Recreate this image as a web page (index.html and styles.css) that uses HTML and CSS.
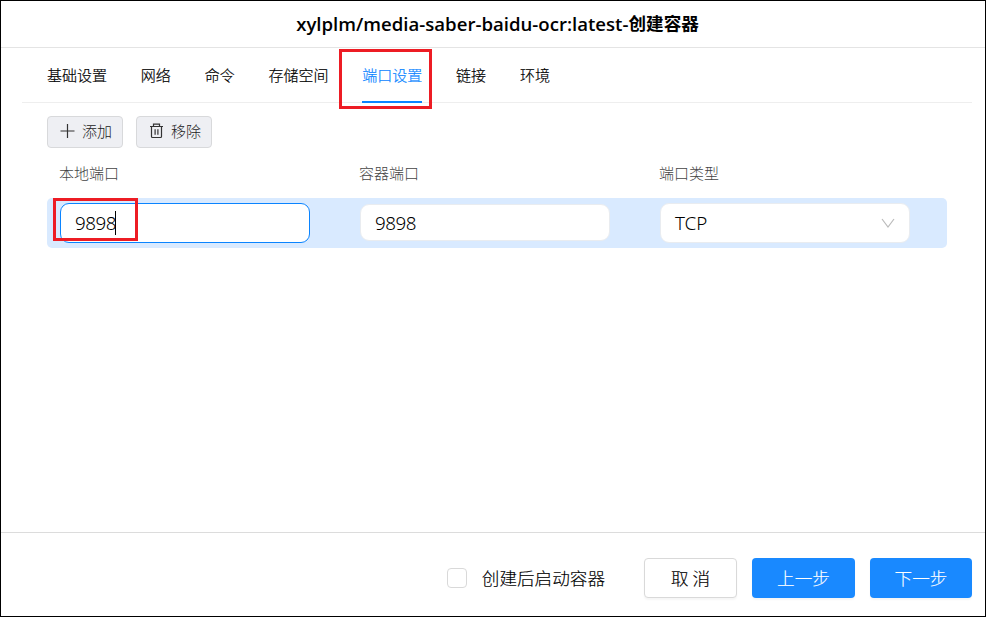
FILE: index.html
```
<!DOCTYPE html>
<html lang="zh-CN">
<head>
<meta charset="utf-8">
<title>创建容器</title>
<link rel="stylesheet" href="styles.css">
</head>
<body>
<div class="dialog">
  <header class="dialog-header"><h1><span class="image-name">xylplm/media-saber-baidu-ocr:latest-</span><span class="action-name">创建容器</span></h1></header>
  <main class="content">
    <nav class="tabs">
      <span class="tab">基础设置</span>
      <span class="tab">网络</span>
      <span class="tab">命令</span>
      <span class="tab">存储空间</span>
      <span class="tab active">端口设置<i class="mark mark-tab"></i></span>
      <span class="tab">链接</span>
      <span class="tab">环境</span>
    </nav>
    <div class="toolbar">
      <button class="tool"><svg width="16" height="16" viewBox="0 0 16 16"><path d="M8.5 1v14M1.5 8h14"/></svg>添加</button>
      <button class="tool"><svg width="16" height="16" viewBox="0 0 16 16"><path d="M2 3.5h13M5.5 3.5V1.2h6v2.3M3.5 3.5v10q0 1 1 1h8q1 0 1-1v-10M7.1 6.2v5.6M9.9 6.2v5.6"/></svg>移除</button>
    </div>
    <div class="grid head"><span>本地端口</span><span>容器端口</span><span>端口类型</span></div>
    <div class="grid row">
      <div class="field number focused">9898<i class="caret"></i><i class="mark mark-port"></i></div>
      <div class="field number short">9898</div>
      <div class="field select">TCP<svg width="14" height="12" viewBox="0 0 14 12"><path d="M1 2l6 8 6-8"/></svg></div>
    </div>
  </main>
  <footer class="footer">
    <label class="start"><span class="checkbox"></span><span class="start-text">创建后启动容器</span></label>
    <button class="btn cancel">取 消</button>
    <button class="btn primary">上一步</button>
    <button class="btn primary next">下一步</button>
  </footer>
</div>
</body>
</html>
```
FILE: styles.css
```
* { box-sizing: border-box; }
body {
  margin: 0;
  background: #fff;
  color: #000;
  font-family: "Noto Sans CJK SC", sans-serif;
  font-weight: 300;
}
button { font: inherit; margin: 0; padding: 0; }
.dialog {
  width: 986px;
  height: 617px;
  border: 1px solid #000;
  display: flex;
  flex-direction: column;
}
.dialog-header {
  height: 47px;
  flex: none;
  border-bottom: 1px solid #e4e4e4;
  display: flex;
  justify-content: center;
  padding-left: 9px;
}
h1 {
  margin: 0;
  display: flex;
  font-size: 18px;
  line-height: 44px;
  font-weight: 600;
  white-space: nowrap;
  color: #000;
}
.image-name {
  font-family: "Open Sans", "Noto Sans", sans-serif;
  font-size: 18.6px;
  line-height: 45px;
}
.action-name { font-size: 17.6px; font-weight: 700; }
.content { flex: 1; }
.tabs {
  height: 55px;
  margin: 0 13px 0 21px;
  padding-left: 25px;
  border-bottom: 1px solid #eee;
  display: flex;
  gap: 33.8px;
  font-size: 15px;
  -webkit-text-stroke: .2px;
  line-height: 53px;
}
.tab { position: relative; height: 55px; white-space: nowrap; }
.active { color: #0a84ff; border-bottom: 2px solid #0a84ff; }
.mark { position: absolute; border: 3px solid #ed1c24; }
.mark-tab { left: -23px; top: 1px; width: 93px; height: 60px; }
.toolbar { display: flex; gap: 13px; padding: 13px 0 0 46px; }
.tool {
  width: 76px;
  height: 32px;
  border: 1px solid #d8d9db;
  border-radius: 4px;
  background: #eeeff3;
  color: #222;
  display: flex;
  align-items: center;
  justify-content: center;
  gap: 7px;
  font-size: 15px;
  line-height: 28px;
  padding: 0 0 2px 1px;
}
svg { fill: none; stroke: #333; stroke-width: 1.2; flex: none; }
.grid {
  margin-left: 46px;
  width: 900px;
  padding-left: 12px;
  display: grid;
  grid-template-columns: 300px 300px 288px;
  align-items: center;
}
.head { height: 50px; padding-bottom: 2px; font-size: 15px; color: #444; }
.row { height: 50px; background: #d9eaff; border-radius: 5px; }
.field {
  position: relative;
  margin-left: 1px;
  width: 250px;
  height: 40px;
  border: 1px solid #e9ecf0;
  border-radius: 9px;
  background: #fff;
  padding-left: 14px;
  display: flex;
  align-items: center;
  font-family: "Noto Sans", "Open Sans", sans-serif;
  font-size: 18.8px;
}
.number { letter-spacing: -.45px; }
.short { height: 37px; margin-top: -1px; }
.focused { border-color: #0a84ff; }
.caret { width: 1px; height: 24px; margin-left: -1px; background: #000; }
.mark-port { left: -8px; top: -6px; width: 85px; height: 43px; }
.select { justify-content: space-between; padding-right: 14px; }
.select svg { stroke: #bbb; stroke-width: 1.2; }
.footer {
  height: 84px;
  flex: none;
  border-top: 1px solid #dcdcdc;
  padding: 7px 13px 0 0;
  display: flex;
  align-items: center;
  justify-content: flex-end;
  font-size: 17.6px;
  -webkit-text-stroke: .15px;
}
.start { display: flex; align-items: center; gap: 15px; margin-right: 39px; white-space: nowrap; }
.start-text { padding-bottom: 2px; }
.checkbox { width: 20px; height: 20px; border: 1px solid #d9d9d9; border-radius: 4px; }
.btn { height: 40px; width: 103px; padding-bottom: 2px; border-radius: 4px; box-shadow: 0 2px 2px rgba(0, 0, 0, .04); }
.cancel { width: 93px; border: 1px solid #d9d9d9; background: #fff; color: #000; }
.primary { border: 0; background: #1989ff; color: #fff; margin-left: 15px; }
.next { width: 102px; }
```
